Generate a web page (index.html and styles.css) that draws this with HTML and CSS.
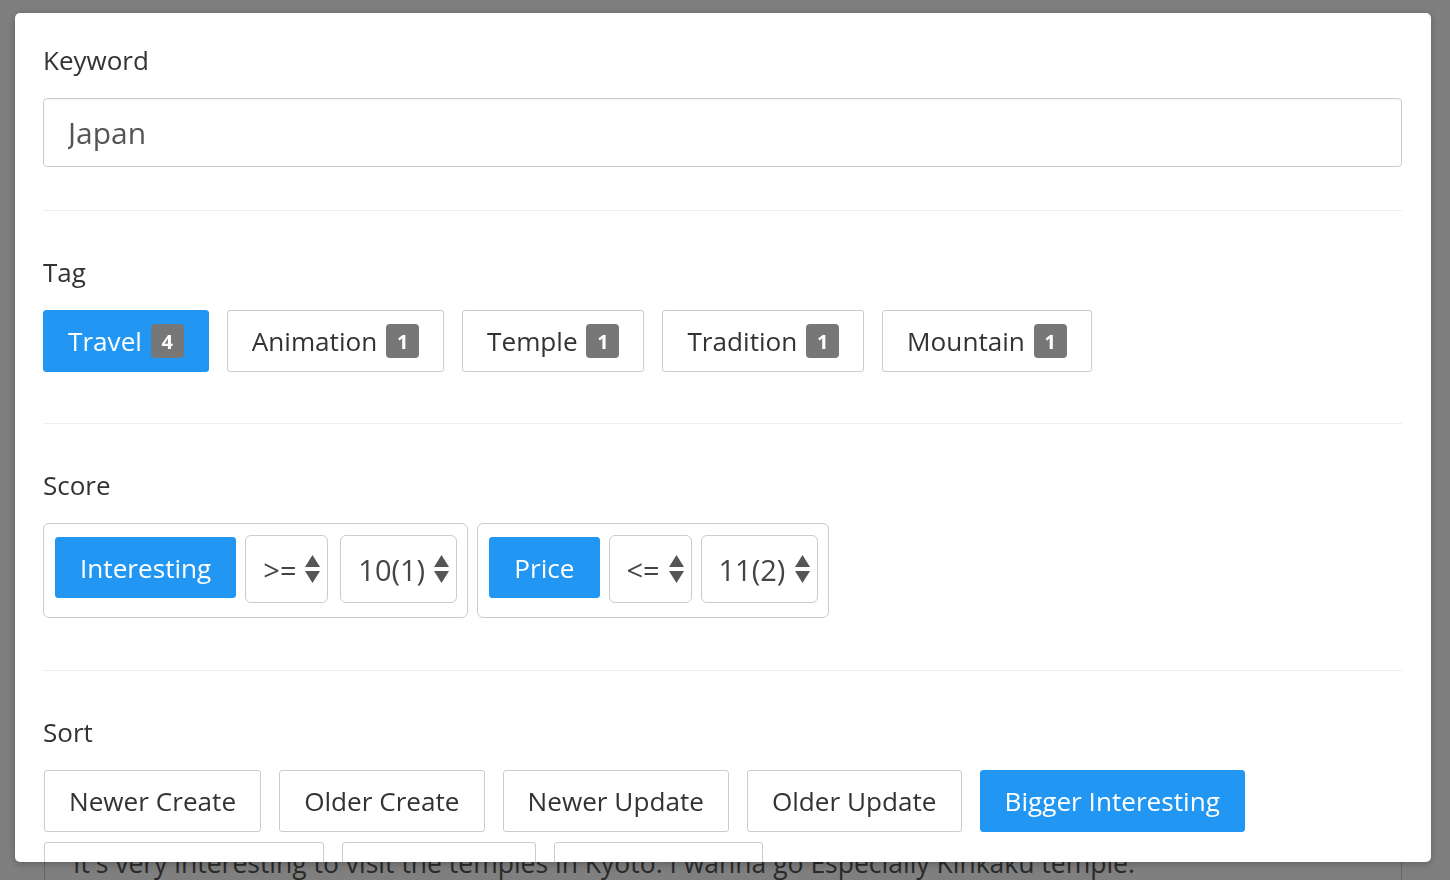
FILE: index.html
```html
<!DOCTYPE html>
<html lang="en">
<head>
<meta charset="utf-8">
<title>Search</title>
<link rel="stylesheet" href="styles.css">
</head>
<body>
<div class="page">
  <div class="card">
    <p class="card-text">It's very interesting to visit the temples in Kyoto. I wanna go Especially Kinkaku temple.</p>
  </div>
</div>
<div class="overlay"></div>
<div class="modal">
  <section class="field">
    <label class="field-label">Keyword</label>
    <input class="text-input" type="text" value="Japan">
  </section>
  <hr class="divider">
  <section class="field">
    <label class="field-label">Tag</label>
    <div class="btn-row tag-row">
      <button class="btn btn-active">Travel <span class="badge">4</span></button>
      <button class="btn">Animation <span class="badge">1</span></button>
      <button class="btn">Temple <span class="badge">1</span></button>
      <button class="btn">Tradition <span class="badge">1</span></button>
      <button class="btn">Mountain <span class="badge">1</span></button>
    </div>
  </section>
  <hr class="divider">
  <section class="field">
    <label class="field-label">Score</label>
    <div class="score-row">
      <div class="score-group">
        <button class="btn btn-active">Interesting</button>
        <div class="select select-op"><span>&gt;=</span><svg class="arrows" width="15" height="28" viewBox="0 0 15 28"><polygon points="0,12 7.5,0 15,12"/><polygon points="0,16 15,16 7.5,28"/></svg></div>
        <div class="select select-val select-gap"><span>10(1)</span><svg class="arrows" width="15" height="28" viewBox="0 0 15 28"><polygon points="0,12 7.5,0 15,12"/><polygon points="0,16 15,16 7.5,28"/></svg></div>
      </div>
      <div class="score-group">
        <button class="btn btn-active">Price</button>
        <div class="select select-op"><span>&lt;=</span><svg class="arrows" width="15" height="28" viewBox="0 0 15 28"><polygon points="0,12 7.5,0 15,12"/><polygon points="0,16 15,16 7.5,28"/></svg></div>
        <div class="select select-val"><span>11(2)</span><svg class="arrows" width="15" height="28" viewBox="0 0 15 28"><polygon points="0,12 7.5,0 15,12"/><polygon points="0,16 15,16 7.5,28"/></svg></div>
      </div>
    </div>
  </section>
  <hr class="divider">
  <section class="field">
    <label class="field-label">Sort</label>
    <div class="btn-row sort-row">
      <button class="btn">Newer Create</button>
      <button class="btn">Older Create</button>
      <button class="btn">Newer Update</button>
      <button class="btn">Older Update</button>
      <button class="btn btn-active">Bigger Interesting</button>
      <button class="btn">Smaller Interesting</button>
      <button class="btn">Bigger Price</button>
      <button class="btn">Smaller Price</button>
    </div>
  </section>
</div>
</body>
</html>
```

FILE: styles.css
```css
* {
  box-sizing: border-box;
}

html, body {
  margin: 0;
  padding: 0;
  height: 100%;
  overflow: hidden;
}

body {
  font-family: "Open Sans", "Noto Sans", sans-serif;
  color: #333;
  background: #fff;
}

/* page behind the dialog */
.page {
  padding: 820px 48px 0 44px;
}

.card {
  border: 1px solid #ccc;
  border-radius: 4px;
  padding: 24px 28px;
  height: 200px;
}

.card-text {
  margin: 0;
  font-size: 26.5px;
  line-height: 36px;
  color: #555;
  white-space: nowrap;
}

.overlay {
  position: fixed;
  inset: 0;
  background: rgba(0, 0, 0, 0.5);
}

/* dialog */
.modal {
  position: fixed;
  top: 13px;
  left: 15px;
  width: 1416px;
  height: 849px;
  background: #fff;
  border-radius: 5px;
  overflow: hidden;
  padding: 29px 29px 0 28px;
  box-shadow: 0 2px 8px rgba(0, 0, 0, 0.25);
}

.field {
  display: flex;
  flex-direction: column;
  align-items: stretch;
}

.field-label {
  display: block;
  font-size: 26px;
  line-height: 36px;
  color: #333;
  margin: 0 0 20px;
}

.text-input {
  display: block;
  width: 100%;
  height: 69px;
  border: 1px solid #ccc;
  border-radius: 4px;
  padding: 0 24px;
  font-family: inherit;
  font-size: 30px;
  color: #555;
  outline: none;
  box-shadow: inset 0 1px 1px rgba(0, 0, 0, 0.04);
}

.divider {
  border: 0;
  border-top: 1px solid #eee;
  margin: 43px 0;
  height: 0;
}

.btn-row {
  display: flex;
  flex-wrap: wrap;
  gap: 10px 18px;
}

.tag-row {
  margin-bottom: 8px;
}

.sort-row {
  padding-left: 1px;
}

.btn {
  display: inline-flex;
  align-items: center;
  height: 62px;
  padding: 0 24px;
  border: 1px solid #ccc;
  border-radius: 3px;
  background: #fff;
  font-family: inherit;
  font-size: 26.15px;
  color: #333;
  white-space: pre;
  cursor: pointer;
}

.btn-active {
  background: #2196f3;
  border-color: #2196f3;
  color: #fff;
}

.badge {
  display: inline-flex;
  align-items: center;
  justify-content: center;
  width: 33px;
  height: 34px;
  margin-left: 2px;
  border-radius: 4px;
  background: #777;
  color: #fff;
  font-size: 20px;
  font-weight: 700;
}

.score-row {
  display: flex;
  gap: 9px;
  margin-bottom: 9px;
}

.score-group {
  display: flex;
  align-items: flex-start;
  gap: 9px;
  border: 1px solid #ccc;
  border-radius: 6px;
  padding: 11px 10px 14px 11px;
}

.score-group .btn {
  height: 61px;
  margin-top: 2px;
}

.select {
  display: flex;
  align-items: center;
  height: 68px;
  border: 1px solid #ccc;
  border-radius: 6px;
  padding: 0 7px 0 17px;
  font-size: 29px;
  color: #444;
}

.select span {
  flex: 1;
}

.select-op {
  width: 83px;
}

.select-val {
  width: 117px;
}

.select-gap {
  margin-left: 3px;
}

.arrows {
  display: block;
  fill: #555;
}
```
